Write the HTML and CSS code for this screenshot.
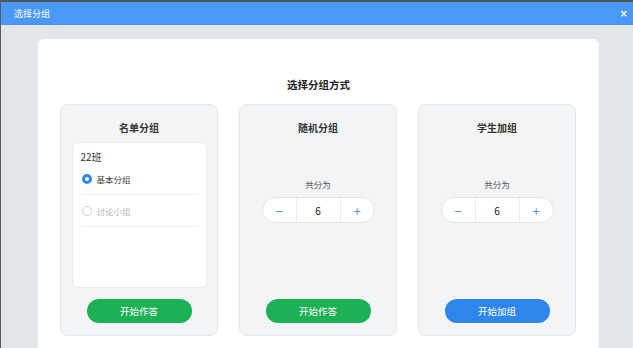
FILE: index.html
```html
<html>
<head>
    <title>选择分组</title>
    <link rel="stylesheet" href="styles.css">
</head>
<body>
    <div class="topline"></div>
    <div class="titlebar">
        <span class="title">选择分组</span>
        <span class="close">&times;</span>
    </div>
    <section class="innhold">
        <div class="panel">
            <h2 class="heading">选择分组方式</h2>
            <div class="cards">
                <div class="card">
                    <h3>名单分组</h3>
                    <div class="listbox">
                        <div class="classname">22班</div>
                        <div class="option"><span class="radio checked"></span><span>基本分组</span></div>
                        <div class="option off"><span class="radio"></span><span>讨论小组</span></div>
                    </div>
                    <button class="btn green">开始作答</button>
                </div>
                <div class="card">
                    <h3>随机分组</h3>
                    <div class="label">共分为</div>
                    <div class="stepper">
                        <span class="minus">&minus;</span>
                        <span class="num">6</span>
                        <span class="plus">+</span>
                    </div>
                    <button class="btn green">开始作答</button>
                </div>
                <div class="card">
                    <h3>学生加组</h3>
                    <div class="label">共分为</div>
                    <div class="stepper">
                        <span class="minus">&minus;</span>
                        <span class="num">6</span>
                        <span class="plus">+</span>
                    </div>
                    <button class="btn blue">开始加组</button>
                </div>
            </div>
        </div>
    </section>
</body>
</html>
```

FILE: styles.css
```css
* {
    font-family: "Noto Sans CJK SC", "Noto Sans", sans-serif;
    box-sizing: border-box;
}
body {
    margin: 0;
    height: 348px;
    overflow: hidden;
    background-color: #e3e6e9;
    border-left: 1px solid #5a5a5a;
}
.topline {
    height: 2px;
    background-color: #555555;
}
.titlebar {
    height: 23px;
    background-color: #4a98f7;
    color: white;
    display: flex;
    align-items: center;
    justify-content: space-between;
    padding-left: 13px;
    padding-right: 5px;
}
.title {
    font-size: 9px;
}
.close {
    font-family: "DejaVu Sans", sans-serif;
    font-size: 10px;
    font-weight: bold;
    line-height: 10px;
}
.innhold {
    padding: 14px 34px 0 37px;
    height: 323px;
}
.panel {
    background-color: white;
    border-radius: 6px 6px 0 0;
    height: 100%;
    padding: 38px 22px 0 22px;
}
.heading {
    margin: 0;
    text-align: center;
    font-size: 10.5px;
    line-height: 16px;
    font-weight: bold;
    color: #222;
}
.cards {
    display: flex;
    gap: 21px;
    margin-top: 11px;
}
.card {
    width: 158px;
    height: 232px;
    background-color: #f2f4f6;
    border: 1px solid #e4e7ea;
    border-radius: 8px;
    display: flex;
    flex-direction: column;
    align-items: center;
    padding-top: 15px;
}
.card h3 {
    margin: 0;
    font-size: 10px;
    line-height: 15px;
    font-weight: bold;
    color: #333;
}
.listbox {
    width: 135px;
    height: 146px;
    margin-top: 7px;
    background-color: white;
    border: 1px solid #e8eaed;
    border-radius: 6px;
    padding: 8px 8px 0 8px;
}
.classname {
    font-size: 10px;
    line-height: 12px;
    color: #333;
}
.option {
    display: flex;
    align-items: center;
    height: 32px;
    border-bottom: 1px solid #ebedf0;
    font-size: 8.5px;
    color: #444;
}
.option.off {
    color: #b8b8b8;
}
.radio {
    width: 10px;
    height: 10px;
    border-radius: 50%;
    border: 1px solid #cfd3d8;
    background-color: white;
    margin-right: 5px;
    margin-left: 1px;
}
.radio.checked {
    border: 3px solid #2f87ee;
}
.label {
    margin-top: 43px;
    font-size: 8.5px;
    line-height: 12px;
    color: #555;
}
.stepper {
    margin-top: 7px;
    width: 113px;
    height: 26px;
    background-color: white;
    border: 1px solid #e3e5e8;
    border-radius: 13px;
    display: flex;
}
.stepper span {
    display: flex;
    align-items: center;
    justify-content: center;
}
.minus, .plus {
    width: 33px;
    font-size: 13px;
    color: #5b8fd2;
}
.num {
    flex: 1;
    border-left: 1px solid #ebedf0;
    border-right: 1px solid #ebedf0;
    font-size: 10px;
    color: #222;
}
.btn {
    margin-top: auto;
    margin-bottom: 12px;
    width: 105px;
    height: 24px;
    border: 0px;
    border-radius: 12px;
    color: white;
    font-size: 9.5px;
}
.green {
    background-color: #1db156;
}
.blue {
    background-color: #2e86ed;
}
```
